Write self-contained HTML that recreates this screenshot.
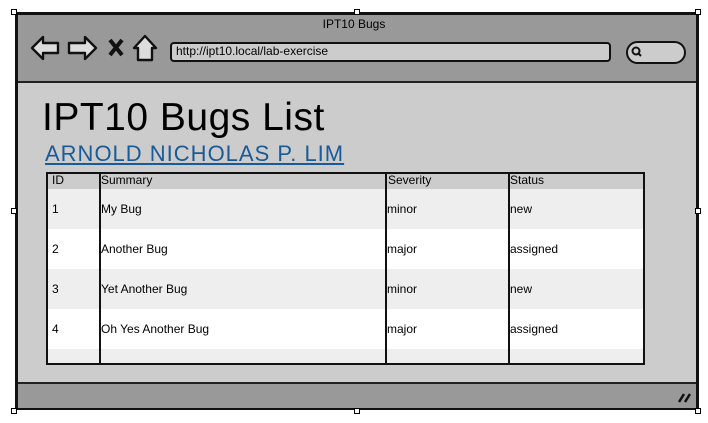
<!DOCTYPE html>
<html><head><style>
*{margin:0;padding:0;box-sizing:border-box}
body{width:708px;height:423px;background:#fff;position:relative;overflow:hidden;font-family:"Liberation Sans",sans-serif}
.a{position:absolute}
.h{position:absolute;width:6px;height:6px;border:1px solid #000;background:#fff}
.t{position:absolute;font-size:12px;color:#000}
</style></head><body>
<div class="a" style="left:15px;top:12px;width:684px;height:398px;border:3px solid #111;background:#ccc"></div>
<div class="a" style="left:18px;top:15px;width:678px;height:68px;background:#999;border-bottom:2px solid #222"></div>
<div class="a" style="left:18px;top:382px;width:678px;height:26px;background:#999;border-top:2px solid #222"></div>
<div class="t" style="left:0;width:708px;text-align:center;top:17px;font-size:12px">IPT10 Bugs</div>
<svg class="a" style="left:28px;top:33px" width="135" height="30">
<path d="M4 15 L15 4 L15 10 L30 10 L30 20 L15 20 L15 26 Z" fill="#ddd" stroke="#111" stroke-width="2.4" stroke-linejoin="round"/>
<path d="M68 15 L57 4 L57 10 L41 10 L41 20 L57 20 L57 26 Z" fill="#ddd" stroke="#111" stroke-width="2.4" stroke-linejoin="round"/>
<path d="M82 7 L94 22 M94 7 L82 22" stroke="#111" stroke-width="4"/>
<path d="M106 15 L117 3 L128 15 L124 15 L124 27 L110 27 L110 15 Z" fill="#ddd" stroke="#111" stroke-width="2.4" stroke-linejoin="round"/>
</svg>
<div class="a" style="left:170px;top:42px;width:441px;height:20px;border:2px solid #111;border-radius:4px;background:#ccc"></div>
<div class="t" style="left:176px;top:44px;font-size:12px">http://ipt10.local/lab-exercise</div>
<div class="a" style="left:626px;top:41px;width:60px;height:23px;border:2px solid #111;border-radius:12px;background:#ccc"></div>
<svg class="a" style="left:630px;top:45px" width="14" height="14"><circle cx="6" cy="6" r="3.5" fill="none" stroke="#111" stroke-width="2"/><path d="M8.5 8.5 L11 11" stroke="#111" stroke-width="2"/></svg>
<div class="a" style="left:42px;top:96px;font-size:39px;color:#000;letter-spacing:0.5px">IPT10 Bugs List</div>
<div class="a" style="left:45px;top:141px;font-size:22px;color:#1a5a96;text-decoration:underline;letter-spacing:1px">ARNOLD NICHOLAS P. LIM</div>
<div class="a" style="left:46px;top:172px;width:599px;height:193px;border:2px solid #111;background:#eee;overflow:hidden">
 <div class="a" style="left:0;top:0;width:600px;height:15px;background:#ccc"></div>
 <div class="a" style="left:0;top:55px;width:600px;height:40px;background:#fff"></div>
 <div class="a" style="left:0;top:135px;width:600px;height:40px;background:#fff"></div>
 <div class="a" style="left:51px;top:0;width:2px;height:193px;background:#111"></div>
 <div class="a" style="left:337px;top:0;width:2px;height:193px;background:#111"></div>
 <div class="a" style="left:460px;top:0;width:2px;height:193px;background:#111"></div>
</div>
<div class="t" style="left:52px;top:173px">ID</div><div class="t" style="left:101px;top:173px">Summary</div><div class="t" style="left:388px;top:173px">Severity</div><div class="t" style="left:510px;top:173px">Status</div>
<div class="t" style="left:52px;top:202px">1</div><div class="t" style="left:101px;top:202px">My Bug</div><div class="t" style="left:387px;top:202px">minor</div><div class="t" style="left:510px;top:202px">new</div>
<div class="t" style="left:52px;top:242px">2</div><div class="t" style="left:101px;top:242px">Another Bug</div><div class="t" style="left:387px;top:242px">major</div><div class="t" style="left:510px;top:242px">assigned</div>
<div class="t" style="left:52px;top:282px">3</div><div class="t" style="left:101px;top:282px">Yet Another Bug</div><div class="t" style="left:387px;top:282px">minor</div><div class="t" style="left:510px;top:282px">new</div>
<div class="t" style="left:52px;top:322px">4</div><div class="t" style="left:101px;top:322px">Oh Yes Another Bug</div><div class="t" style="left:387px;top:322px">major</div><div class="t" style="left:510px;top:322px">assigned</div>
<svg class="a" style="left:677px;top:391px" width="16" height="14"><path d="M2 11 L7 3 M8 11 L13 3" stroke="#111" stroke-width="2.5"/></svg>
<div class="h" style="left:11px;top:9px"></div><div class="h" style="left:354px;top:9px"></div><div class="h" style="left:695px;top:9px"></div>
<div class="h" style="left:11px;top:208px"></div><div class="h" style="left:695px;top:208px"></div>
<div class="h" style="left:11px;top:408px"></div><div class="h" style="left:354px;top:408px"></div><div class="h" style="left:695px;top:408px"></div>
</body></html>
